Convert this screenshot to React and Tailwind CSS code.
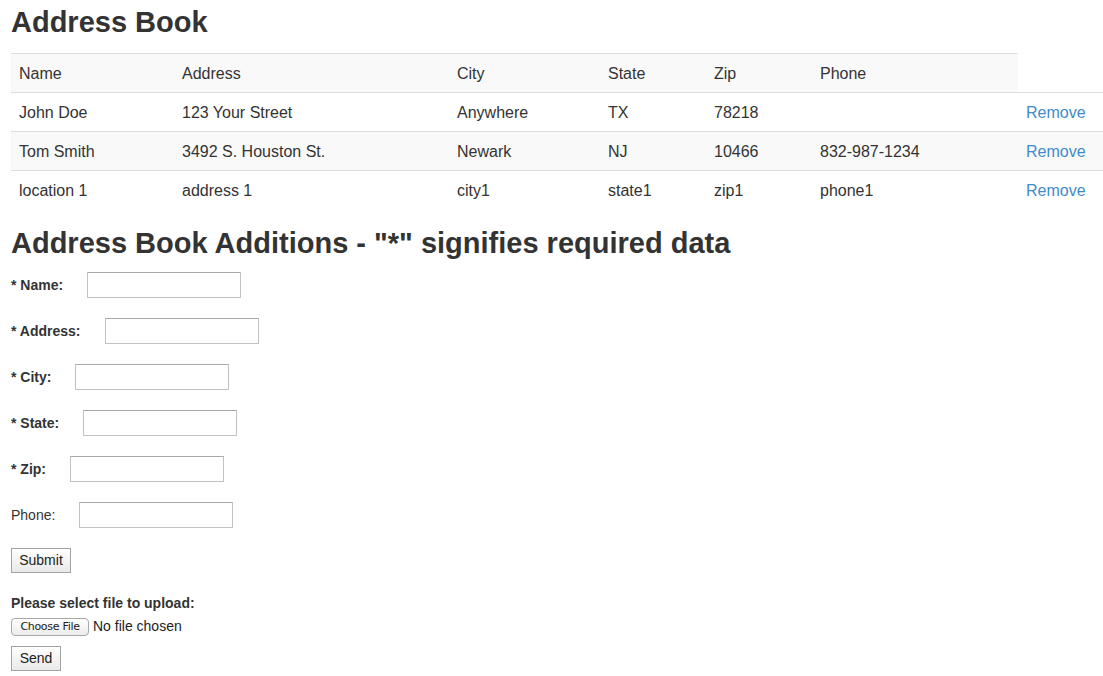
import React, { useState } from 'react';

const initialEntries = [
  { name: 'John Doe', address: '123 Your Street', city: 'Anywhere', state: 'TX', zip: '78218', phone: '' },
  { name: 'Tom Smith', address: '3492 S. Houston St.', city: 'Newark', state: 'NJ', zip: '10466', phone: '832-987-1234' },
  { name: 'location 1', address: 'address 1', city: 'city1', state: 'state1', zip: 'zip1', phone: 'phone1' },
];

const fields = [
  { key: 'name', label: '* Name:', required: true },
  { key: 'address', label: '* Address:', required: true },
  { key: 'city', label: '* City:', required: true },
  { key: 'state', label: '* State:', required: true },
  { key: 'zip', label: '* Zip:', required: true },
  { key: 'phone', label: 'Phone:', required: false },
];

const cell = 'px-2 pt-[9px] pb-[7px] border-t border-[#dddddd] text-left align-top';

const App = () => {
  const [entries, setEntries] = useState(initialEntries);
  const [form, setForm] = useState({ name: '', address: '', city: '', state: '', zip: '', phone: '' });

  const handleChange = (e) => {
    const { name, value } = e.target;
    setForm(prev => ({ ...prev, [name]: value }));
  };

  const handleSubmit = (e) => {
    e.preventDefault();
    setEntries(prev => [...prev, form]);
    setForm({ name: '', address: '', city: '', state: '', zip: '', phone: '' });
  };

  const removeEntry = (idx) => {
    setEntries(prev => prev.filter((_, i) => i !== idx));
  };

  return (
    <div className="pl-[11px] text-[#333333] font-['Liberation_Sans',Helvetica,Arial,sans-serif] bg-white min-h-[676px]">
      <h1 className="text-[29px] leading-[33px] font-bold pt-[6px] mb-[14px]">Address Book</h1>

      {/* Address list */}
      <table className="w-[1092px] border-collapse text-[16px] leading-[22px] table-fixed">
        <colgroup>
          <col className="w-[163px]" />
          <col className="w-[275px]" />
          <col className="w-[151px]" />
          <col className="w-[106px]" />
          <col className="w-[106px]" />
          <col className="w-[206px]" />
          <col className="w-[85px]" />
        </colgroup>
        <tbody>
          <tr>
            <td className={`${cell} bg-[#f9f9f9]`}>Name</td>
            <td className={`${cell} bg-[#f9f9f9]`}>Address</td>
            <td className={`${cell} bg-[#f9f9f9]`}>City</td>
            <td className={`${cell} bg-[#f9f9f9]`}>State</td>
            <td className={`${cell} bg-[#f9f9f9]`}>Zip</td>
            <td className={`${cell} bg-[#f9f9f9]`}>Phone</td>
          </tr>
          {entries.map((entry, i) => (
            <tr key={i} className={i % 2 === 1 ? 'bg-[#f9f9f9]' : ''}>
              <td className={cell}>{entry.name}</td>
              <td className={cell}>{entry.address}</td>
              <td className={cell}>{entry.city}</td>
              <td className={cell}>{entry.state}</td>
              <td className={cell}>{entry.zip}</td>
              <td className={cell}>{entry.phone}</td>
              <td className={cell}>
                <a href="#" onClick={(e) => { e.preventDefault(); removeEntry(i); }} className="text-[#428bca] hover:underline">
                  Remove
                </a>
              </td>
            </tr>
          ))}
        </tbody>
      </table>

      <h2 className="text-[29px] leading-[33px] font-bold mt-[18px] mb-[12px]">
        Address Book Additions - "*" signifies required data
      </h2>

      {/* Add form */}
      <form onSubmit={handleSubmit} className="flex flex-col gap-[20px] items-start">
        {fields.map(f => (
          <div key={f.key} className="flex items-center gap-[24px]">
            <label htmlFor={f.key} className={`text-[14px] ${f.required ? 'font-bold' : ''}`}>{f.label}</label>
            <input
              id={f.key}
              name={f.key}
              type="text"
              value={form[f.key]}
              onChange={handleChange}
              required={f.required}
              className="w-[154px] h-[26px] border border-[#c2c2c2] border-t-[#a9a9a9] px-1 text-[13px] outline-none"
            />
          </div>
        ))}
        <button type="submit" className="h-[25px] w-[60px] border border-[#a3a3a3] bg-linear-to-b from-white to-[#e9e9e9] text-[14px] text-[#222]">
          Submit
        </button>
      </form>

      {/* Upload */}
      <div className="mt-[22px] flex flex-col items-start">
        <div className="text-[14px] font-bold leading-[16px]">Please select file to upload:</div>
        <div className="mt-[5px] flex items-center gap-[4px]">
          <button type="button" className="h-[18px] w-[78px] rounded-[4px] border border-[#a9a9a9] bg-linear-to-b from-white to-[#ececec] text-[11px] leading-[14px] text-[#222] font-['DejaVu_Sans',sans-serif] tracking-[-0.3px]">
            Choose File
          </button>
          <span className="text-[14px] text-[#222]">No file chosen</span>
        </div>
        <button type="button" className="mt-[9px] h-[25px] w-[50px] border border-[#a3a3a3] bg-linear-to-b from-white to-[#e9e9e9] text-[14px] text-[#222]">
          Send
        </button>
      </div>
    </div>
  );
};

export default App;
